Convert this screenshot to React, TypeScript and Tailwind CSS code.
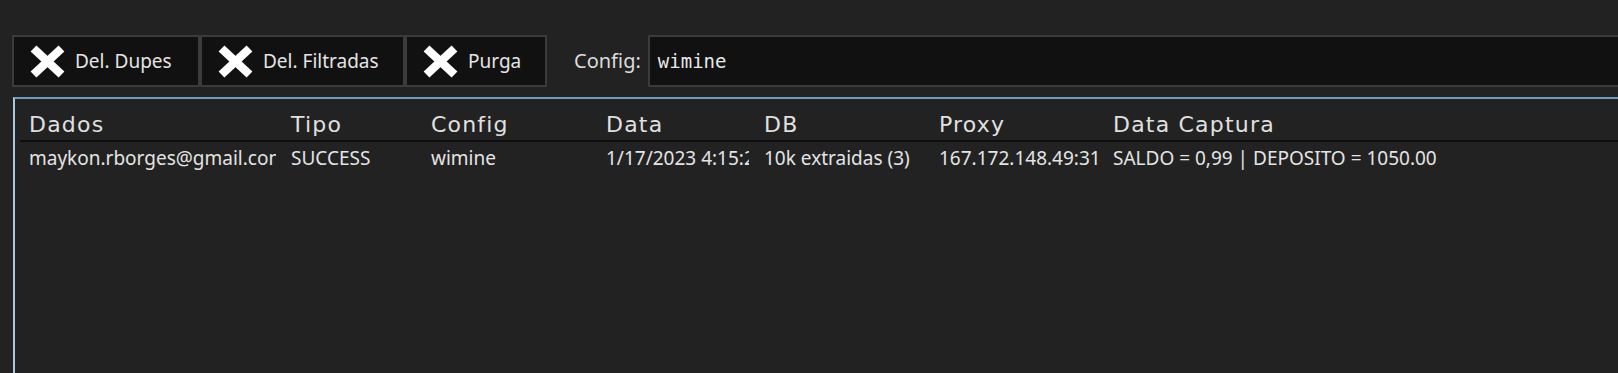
import React from "react";

const XIcon = () => (
  <svg width="35" height="33" viewBox="0 0 35 33" className="shrink-0">
    <line x1="3.5" y1="3.5" x2="31.5" y2="29.5" stroke="#ffffff" strokeWidth="8.5" strokeLinecap="butt" />
    <line x1="31.5" y1="3.5" x2="3.5" y2="29.5" stroke="#ffffff" strokeWidth="8.5" strokeLinecap="butt" />
  </svg>
);

const Btn = ({ label, w }: { label: string; w: string }) => (
  <div className={`flex h-[52px] shrink-0 items-center gap-[10px] border-2 border-[#3b3b3b] bg-[#111111] pl-[16px] ${w}`}>
    <XIcon />
    <span className="whitespace-nowrap text-[19px] leading-[26px] text-[#e4e4e4]">{label}</span>
  </div>
);

const cols = [
  { h: "Dados", v: "maykon.rborges@gmail.com", w: "w-[262px]" },
  { h: "Tipo", v: "SUCCESS", w: "w-[140px]" },
  { h: "Config", v: "wimine", w: "w-[175px]" },
  { h: "Data", v: "1/17/2023 4:15:22 PM", w: "w-[158px]" },
  { h: "DB", v: "10k extraidas (3)", w: "w-[175px]" },
  { h: "Proxy", v: "167.172.148.49:3128", w: "w-[174px]" },
  { h: "Data Captura", v: "SALDO = 0,99 | DEPOSITO = 1050.00", w: "w-[500px]" },
];

export default function App() {
  return (
    <div
      className="h-[373px] w-[1618px] overflow-hidden bg-[#222222] text-[#e4e4e4]"
      style={{ fontFamily: '"Noto Sans", "Open Sans", sans-serif' }}
    >
      <div className="flex items-center pl-[12px] pt-[35px]">
        <Btn label="Del. Dupes" w="w-[188px]" />
        <Btn label="Del. Filtradas" w="w-[205px]" />
        <Btn label="Purga" w="w-[142px]" />
        <span className="ml-[27px] shrink-0 whitespace-nowrap text-[20px] leading-[26px] text-[#dcdcdc]">Config:</span>
        <div className="ml-[7px] flex h-[52px] w-[1100px] shrink-0 items-center border-2 border-[#3b3b3b] bg-[#111111] pl-[8px]">
          <span
            className="text-[19px] font-medium leading-[26px] text-[#e8e8e8]"
            style={{ fontFamily: '"DejaVu Sans Mono", "Liberation Mono", monospace' }}
          >
            wimine
          </span>
        </div>
      </div>
      <div className="ml-[13px] mt-[10px] h-[300px] border-l-2 border-t-2 border-l-[#a9c8de] border-t-[#6b9bc3]">
        <div className="ml-[5px] flex h-[43px] items-end border-b-2 border-[#0e0e0e] pb-[2px] pl-[9px]">
          {cols.map((c) => (
            <div
              key={c.h}
              className={`${c.w} shrink-0 whitespace-nowrap text-[22px] leading-[26px] tracking-[1.2px] text-[#e0e0e0]`}
              style={{ fontFamily: '"DejaVu Sans", sans-serif' }}
            >
              {c.h}
            </div>
          ))}
        </div>
        <div className="ml-[14px] flex pt-[3px]">
          {cols.map((c) => (
            <div key={c.h} className={`${c.w} shrink-0 pr-[15px]`}>
              <div className="overflow-hidden whitespace-nowrap text-[19px] leading-[26px] text-[#e4e4e4]">{c.v}</div>
            </div>
          ))}
        </div>
      </div>
    </div>
  );
}
